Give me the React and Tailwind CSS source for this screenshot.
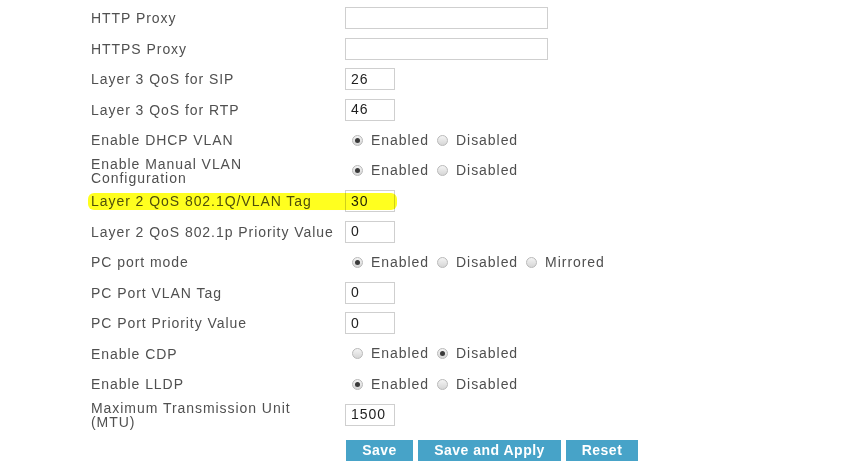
import React from "react";

const font = { fontFamily: '"Liberation Sans", Arial, sans-serif' };

function Radio({ checked }) {
  return (
    <span className="inline-flex items-center justify-center w-[11px] h-[11px] rounded-full border border-[#b9b9b9] bg-gradient-to-b from-[#f4f4f4] to-[#d6d6d6] shrink-0">
      {checked && <span className="block w-[5px] h-[5px] rounded-full bg-[#3a3a3a]" />}
    </span>
  );
}

function RadioGroup({ options, value }) {
  return (
    <div className="flex items-center pl-[7px]">
      {options.map((o) => (
        <div key={o} className="flex items-center mr-[8px]">
          <Radio checked={o === value} />
          <span className="ml-[8px] text-[14px] tracking-[0.95px] text-[#4f4f4f]">{o}</span>
        </div>
      ))}
    </div>
  );
}

function TextInput({ value, wide }) {
  return (
    <div
      className={
        (wide ? "w-[203px]" : "w-[50px]") +
        " h-[22px] border border-[#cfcfcf] bg-white flex items-center pl-[5px] text-[14px] tracking-[0.95px] text-[#1e1e1e]"
      }
    >
      {value}
    </div>
  );
}

function Row({ label, children }) {
  return (
    <div className="flex items-center h-[30.5px]">
      <div className="w-[254px] text-[14px] leading-[14px] tracking-[0.95px] text-[#505050]">{label}</div>
      <div>{children}</div>
    </div>
  );
}

export default function App() {
  const ED = ["Enabled", "Disabled"];
  return (
    <div className="relative w-[851px] h-[469px] bg-white overflow-hidden" style={font}>
      <div className="pl-[91px] pt-[3px]">
        <Row label="HTTP Proxy"><TextInput wide value="" /></Row>
        <Row label="HTTPS Proxy"><TextInput wide value="" /></Row>
        <Row label="Layer 3 QoS for SIP"><TextInput value="26" /></Row>
        <Row label="Layer 3 QoS for RTP"><TextInput value="46" /></Row>
        <Row label="Enable DHCP VLAN"><RadioGroup options={ED} value="Enabled" /></Row>
        <Row label={<>Enable Manual VLAN<br />Configuration</>}><RadioGroup options={ED} value="Enabled" /></Row>
        <Row label="Layer 2 QoS 802.1Q/VLAN Tag"><TextInput value="30" /></Row>
        <Row label="Layer 2 QoS 802.1p Priority Value"><TextInput value="0" /></Row>
        <Row label="PC port mode"><RadioGroup options={["Enabled", "Disabled", "Mirrored"]} value="Enabled" /></Row>
        <Row label="PC Port VLAN Tag"><TextInput value="0" /></Row>
        <Row label="PC Port Priority Value"><TextInput value="0" /></Row>
        <Row label="Enable CDP"><RadioGroup options={ED} value="Disabled" /></Row>
        <Row label="Enable LLDP"><RadioGroup options={ED} value="Enabled" /></Row>
        <Row label={<>Maximum Transmission Unit<br />(MTU)</>}><TextInput value="1500" /></Row>
        <div className="flex gap-[5px] pl-[255px] mt-[10px]">
          <button className="w-[67px] h-[21px] bg-[#47a3c8] text-white text-[14px] font-bold tracking-[0.5px] flex items-center justify-center">Save</button>
          <button className="w-[143px] h-[21px] bg-[#47a3c8] text-white text-[14px] font-bold tracking-[0.5px] flex items-center justify-center">Save and Apply</button>
          <button className="w-[72px] h-[21px] bg-[#47a3c8] text-white text-[14px] font-bold tracking-[0.5px] flex items-center justify-center">Reset</button>
        </div>
      </div>
      <div className="absolute left-[88px] top-[193px] w-[309px] h-[17px] rounded-[6px] bg-[#ffff1f] mix-blend-multiply pointer-events-none" />
    </div>
  );
}
